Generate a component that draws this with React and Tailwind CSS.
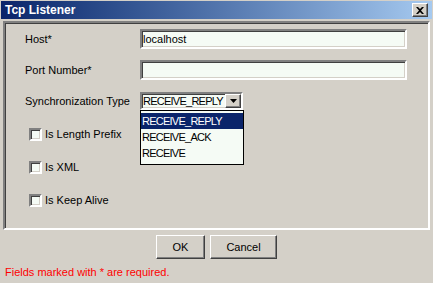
import React from "react";

const sunken =
  "border-2 border-t-[#808080] border-l-[#808080] border-r-white border-b-white shadow-[inset_1px_1px_0_#404040,inset_-1px_-1px_0_#d4d0c8]";
const raised =
  "border border-t-white border-l-white border-r-[#404040] border-b-[#404040] shadow-[inset_-1px_-1px_0_#808080]";

function Checkbox({ label }) {
  return (
    <div className="flex items-center h-[13px] pl-[4px]">
      <div className={`w-[13px] h-[13px] bg-[#f5fbf5] ${sunken}`} />
      <span className="ml-[3px] leading-[13px]">{label}</span>
    </div>
  );
}

export default function App() {
  return (
    <div
      className="w-[433px] h-[283px] bg-[#d4d0c8] flex flex-col text-[11px] text-black overflow-hidden relative"
      style={{ fontFamily: '"Liberation Sans", Arial, sans-serif' }}
    >
      {/* Title bar */}
      <div className="mt-[1px] mx-[1px] h-[18px] flex items-center justify-between pl-[4px] pr-[4px] bg-gradient-to-r from-[#0a246a] to-[#a6caf0]">
        <span className="text-white font-bold text-[12px] leading-none">Tcp Listener</span>
        <div className={`w-[16px] h-[14px] bg-[#d4d0c8] flex items-center justify-center ${raised}`}>
          <svg width="8" height="7" viewBox="0 0 8 7">
            <path d="M0 0h2l2 2 2-2h2L5 3.5 8 7H6L4 5 2 7H0l3-3.5z" fill="#000" />
          </svg>
        </div>
      </div>

      {/* Panel */}
      <div className={`mt-[2px] mx-[3px] h-[209px] relative ${sunken}`}>
        <div className="pt-[6px] pl-[20px] flex flex-col">
          <div className="flex items-center h-[20px]">
            <span className="w-[115px]">Host*</span>
            <div className={`w-[267px] h-[20px] bg-[#f5fbf5] pl-[1px] flex items-center ${sunken}`}>
              localhost
            </div>
          </div>
          <div className="flex items-center h-[20px] mt-[11px]">
            <span className="w-[115px]">Port Number*</span>
            <div className={`w-[267px] h-[20px] bg-[#f5fbf5] ${sunken}`} />
          </div>
          <div className="flex items-center h-[18px] mt-[12px]">
            <span className="w-[115px]">Synchronization Type</span>
            <div className={`w-[103px] h-[18px] bg-[#f5fbf5] flex items-center justify-between ${sunken}`}>
              <span className="pl-[1px] tracking-[-0.75px] whitespace-nowrap">RECEIVE_REPLY</span>
              <div className={`w-[16px] h-[14px] shrink-0 bg-[#d4d0c8] flex items-center justify-center ${raised}`}>
                <svg width="7" height="4" viewBox="0 0 7 4">
                  <path d="M0 0h7L3.5 4z" fill="#000" />
                </svg>
              </div>
            </div>
          </div>
          <div className="flex flex-col gap-[20px] mt-[18px]">
            <Checkbox label="Is Length Prefix" />
            <Checkbox label="Is XML" />
            <Checkbox label="Is Keep Alive" />
          </div>
        </div>

        {/* Dropdown popup */}
        <div className="absolute left-[135px] top-[87px] w-[104px] border border-black bg-[#f5fbf5] flex flex-col pt-[2px] pb-[3px] tracking-[-0.75px]">
          <div className="h-[16px] leading-[16px] pl-[1px] bg-[#0a246a] text-white">RECEIVE_REPLY</div>
          <div className="h-[16px] leading-[16px] pl-[1px]">RECEIVE_ACK</div>
          <div className="h-[16px] leading-[16px] pl-[1px]">RECEIVE</div>
        </div>
      </div>

      {/* Buttons */}
      <div className="mt-[5px] flex justify-center gap-[5px]">
        <div className={`w-[49px] h-[24px] flex items-center justify-center ${raised}`}>OK</div>
        <div className={`w-[67px] h-[24px] flex items-center justify-center ${raised}`}>Cancel</div>
      </div>

      <div className="mt-[7px] pl-[5px] text-[#ff0000] leading-[13px]">Fields marked with * are required.</div>
    </div>
  );
}
